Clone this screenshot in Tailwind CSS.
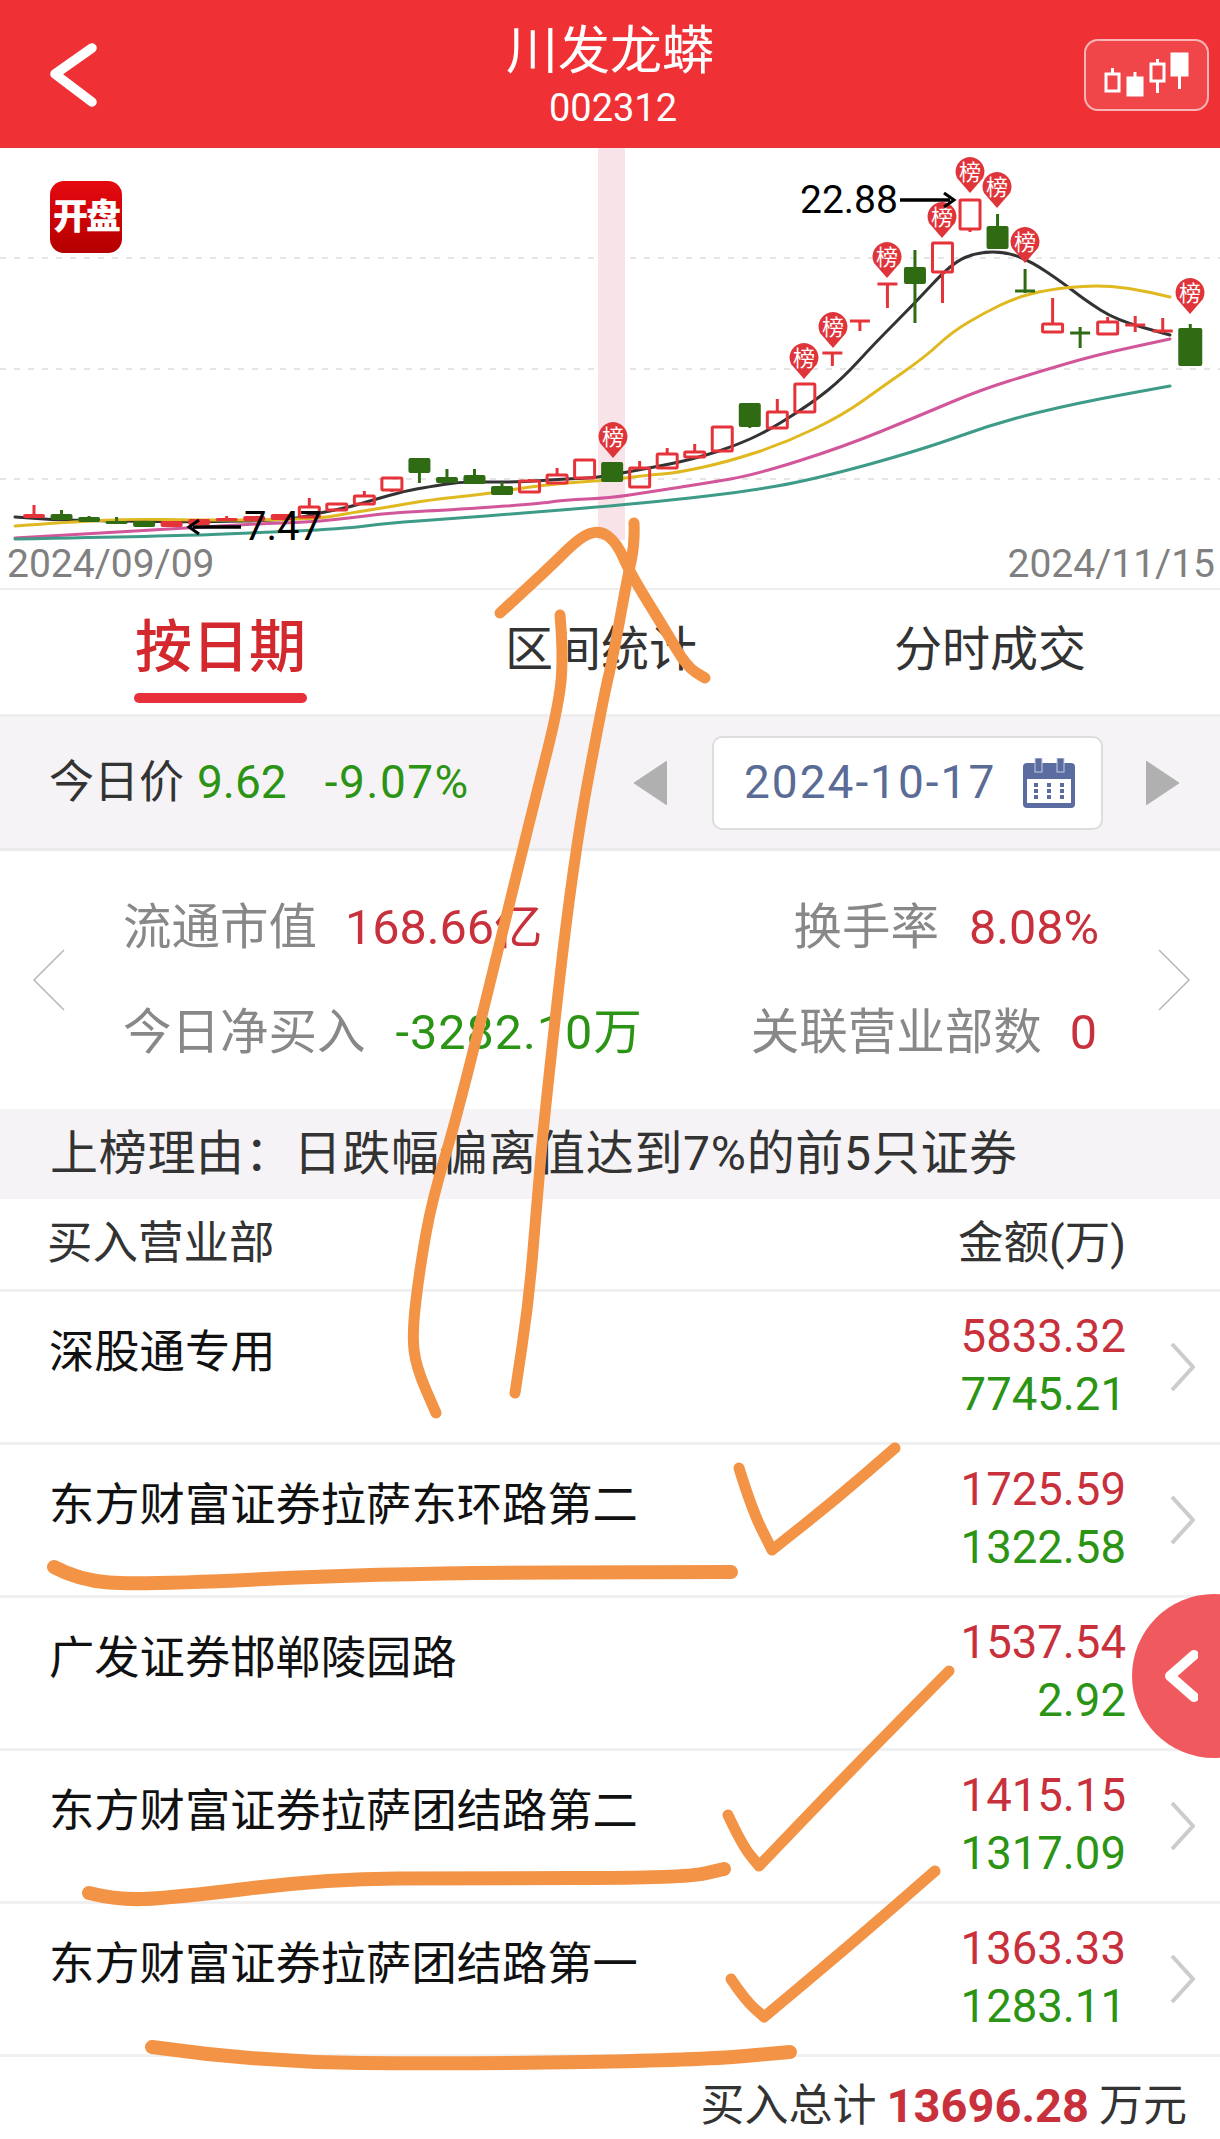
<!DOCTYPE html>
<html lang="zh-CN">
<head>
    <meta charset="UTF-8">
    <meta name="viewport" content="width=device-width, initial-scale=1.0">
    <title>川发龙蟒 龙虎榜</title>
    <script src="https://cdn.jsdelivr.net/npm/@tailwindcss/browser@4"></script>
</head>
<body class="bg-white font-['Roboto','Noto_Sans_CJK_SC',sans-serif]">
<div class="relative w-[1220px] h-[2139px] overflow-hidden bg-white">

    <!-- Header -->
    <header class="h-[148px] bg-[#ef3136] grid grid-cols-[1fr_auto_1fr] text-white">
        <div class="pl-[50px] pt-[43px]">
            <svg width="48" height="64" viewBox="0 0 48 64" fill="none" stroke="white" stroke-width="9.5" stroke-linecap="round" stroke-linejoin="round">
                <path d="M42 5 L5 31 L42 59"/>
            </svg>
        </div>
        <div class="flex flex-col items-center pt-[24px]">
            <div class="text-[52px] leading-[56px]">川发龙蟒</div>
            <div class="mt-[6px] ml-[6px] text-[38px] leading-[44px]">002312</div>
        </div>
        <div class="flex justify-end pr-[11px] pt-[39px]">
            <div class="w-[125px] h-[72px] rounded-[14px] border-[2px] border-white/60 bg-white/10">
                <svg width="120" height="68" viewBox="1087 41 120 68" fill="white" stroke="white" stroke-width="3">
                    <rect x="1107" y="74" width="13" height="17" fill="none"/><path d="M1113.500 68V74"/>
                    <rect x="1129" y="78" width="14" height="17"/><path d="M1136 72V78"/>
                    <rect x="1152" y="64" width="13" height="17" fill="none"/><path d="M1158.500 59V64M1158.500 81V93"/>
                    <rect x="1173" y="54" width="15" height="21"/><path d="M1180.500 75V89"/>
                </svg>
            </div>
        </div>
    </header>

    <!-- K line chart -->
    <div class="relative h-[442px] border-b-[2px] border-[#eeeeee]">
        <svg id="chart" class="block" width="1220" height="440" viewBox="0 148 1220 440">
            <path d="M0 258H1220M0 369H1220M0 479H1220" stroke="#dddddd" stroke-width="1.500" stroke-dasharray="6 8"/>
            <rect x="598" y="148" width="27" height="392" fill="#f7e3e8"/>
            <g id="lines" fill="none" stroke-width="3" stroke-linecap="round" stroke-linejoin="round"></g>
            <g id="candles"></g>
            <g id="pins"></g>
            <text x="800" y="213" font-size="39" fill="#000">22.88</text>
            <path d="M900 200H950" stroke="#000" stroke-width="3.500"/>
            <path d="M944 193L954 200L944 207" fill="none" stroke="#000" stroke-width="3"/>
            <path d="M193 527H241" stroke="#000" stroke-width="3.500"/>
            <path d="M199 520L189 527L199 534" fill="none" stroke="#000" stroke-width="3"/>
            <text x="244" y="540" font-size="40" fill="#000">7.47</text>
            <text x="7" y="577" font-size="39" fill="#808080">2024/09/09</text>
            <text x="1215" y="577" font-size="39" fill="#808080" text-anchor="end">2024/11/15</text>
        </svg>
        <div class="absolute left-[50px] top-[33px] w-[72px] h-[72px] rounded-[14px] bg-linear-to-b from-[#e60a10] to-[#b40000] flex items-center justify-center text-white font-black text-[35px] leading-none tracking-[-2px]">开盘</div>
    </div>

    <!-- Tabs -->
    <div class="h-[124px] flex items-start pt-[24px] pl-[134px] text-[48px] leading-[72px] text-[#333333]">
        <div class="w-[173px] -mt-[2px] flex flex-col items-center">
            <div class="whitespace-nowrap text-[57px] font-medium text-[#d2282e]">按日期</div>
            <div class="mt-[9px] w-[173px] h-[10px] rounded-full bg-[#e8303a]"></div>
        </div>
        <div class="ml-[198px]">区间统计</div>
        <div class="ml-[197px]">分时成交</div>
    </div>

    <!-- Price and date bar -->
    <div class="h-[137px] bg-[#f5f3f5] border-t-[3px] border-b-[3px] border-t-[#eeeeee] border-b-[#ebebeb] flex items-center pl-[49px] pr-[41px] text-[45px]">
        <div class="flex-1 flex items-center">
            <span class="text-[#333333]">今日价</span>
            <span class="ml-[13px] text-[46px] text-[#2b9414]">9.62</span>
            <span class="ml-[38px] text-[46px] tracking-[1.5px] text-[#2b9414]">-9.07%</span>
        </div>
        <svg width="33" height="44" viewBox="0 0 33 44" fill="#b0b0b0"><path d="M33 0V44L0 22Z" stroke="#b0b0b0" stroke-width="1" stroke-linejoin="round"/></svg>
        <div class="ml-[45px] mr-[43px] w-[391px] h-[94px] rounded-[10px] bg-white border-[2px] border-[#dddddd] flex items-center pl-[30px] text-[46px] tracking-[2px] text-[#5a6b96]">
            <span>2024-10-17</span>
            <svg class="ml-auto mr-[26px]" width="52" height="50" viewBox="0 0 52 50">
                <rect x="0" y="5" width="52" height="45" rx="4" fill="#5a6ca0"/>
                <rect x="12" y="0" width="7" height="14" fill="#5a6ca0" stroke="#c6cde0" stroke-width="1"/>
                <rect x="34" y="0" width="7" height="14" fill="#5a6ca0" stroke="#c6cde0" stroke-width="1"/>
                <rect x="4" y="21" width="44" height="24" fill="white"/>
                <path d="M11 25h4v4h-4zM24 25h4v4h-4zM37 25h4v4h-4zM11 31h4v4h-4zM24 31h4v4h-4zM37 31h4v4h-4zM11 37h4v4h-4zM24 37h4v4h-4zM37 37h4v4h-4z" fill="#5a6ca0"/>
            </svg>
        </div>
        <svg width="33" height="44" viewBox="0 0 33 44" fill="#b0b0b0"><path d="M0 0V44L33 22Z" stroke="#b0b0b0" stroke-width="1" stroke-linejoin="round"/></svg>
    </div>

    <!-- Stats -->
    <div class="h-[258px] flex items-center text-[48.5px] leading-[105px] text-[#888888]">
        <svg class="ml-[32px]" width="34" height="62" viewBox="0 0 34 62" fill="none" stroke="#b8b8b8" stroke-width="1.500"><path d="M32 1L2 31L32 61"/></svg>
        <div class="ml-[57px] w-[976px]">
            <div class="flex justify-between">
                <div>流通市值<span class="ml-[28px] text-[#c8313c]">168.66亿</span></div>
                <div>换手率<span class="ml-[30px] text-[#c8313c]">8.08%</span></div>
            </div>
            <div class="flex justify-between">
                <div>今日净买入<span class="ml-[30px] tracking-[1px] text-[#2b9414]">-3282.10万</span></div>
                <div>关联营业部数<span class="ml-[28px] mr-[2px] text-[#c8313c]">0</span></div>
            </div>
        </div>
        <svg class="ml-[58px]" width="34" height="62" viewBox="0 0 34 62" fill="none" stroke="#b8b8b8" stroke-width="1.500"><path d="M2 1L32 31L2 61"/></svg>
    </div>

    <!-- Reason -->
    <div class="h-[90px] bg-[#f5f3f5] pl-[50px] flex items-center text-[48px] tracking-[0.7px] text-[#333333]">上榜理由：日跌幅偏离值达到7%的前5只证券</div>

    <!-- Buy table -->
    <div class="h-[93px] border-b-[3px] border-[#f0f0f0] flex items-center justify-between pl-[47px] pr-[94px] text-[45.5px] text-[#333333]">
        <div>买入营业部</div>
        <div>金额(万)</div>
    </div>

    <div class="h-[153px] border-b-[3px] border-[#f0f0f0] flex items-center pl-[49px]">
        <div class="self-start flex-1 pt-[32px] text-[45.3px] leading-[58px] text-[#111111]">深股通专用</div>
        <div class="self-start pt-[16px] text-right text-[45.5px] leading-[58px]">
            <div class="text-[#c8313c]">5833.32</div>
            <div class="text-[#2b9414]">7745.21</div>
        </div>
        <svg class="ml-[44px] mr-[25px]" width="25" height="48" viewBox="0 0 25 48" fill="none" stroke="#cccccc" stroke-width="4"><path d="M2 1L23 24L2 47"/></svg>
    </div>
    <div class="h-[153px] border-b-[3px] border-[#f0f0f0] flex items-center pl-[49px]">
        <div class="self-start flex-1 pt-[32px] text-[45.3px] leading-[58px] text-[#111111]">东方财富证券拉萨东环路第二</div>
        <div class="self-start pt-[16px] text-right text-[45.5px] leading-[58px]">
            <div class="text-[#c8313c]">1725.59</div>
            <div class="text-[#2b9414]">1322.58</div>
        </div>
        <svg class="ml-[44px] mr-[25px]" width="25" height="48" viewBox="0 0 25 48" fill="none" stroke="#cccccc" stroke-width="4"><path d="M2 1L23 24L2 47"/></svg>
    </div>
    <div class="h-[153px] border-b-[3px] border-[#f0f0f0] flex items-center pl-[49px]">
        <div class="self-start flex-1 pt-[32px] text-[45.3px] leading-[58px] text-[#111111]">广发证券邯郸陵园路</div>
        <div class="self-start pt-[16px] text-right text-[45.5px] leading-[58px]">
            <div class="text-[#c8313c]">1537.54</div>
            <div class="text-[#2b9414]">2.92</div>
        </div>
        <svg class="ml-[44px] mr-[25px]" width="25" height="48" viewBox="0 0 25 48" fill="none" stroke="#cccccc" stroke-width="4"><path d="M2 1L23 24L2 47"/></svg>
    </div>
    <div class="h-[153px] border-b-[3px] border-[#f0f0f0] flex items-center pl-[49px]">
        <div class="self-start flex-1 pt-[32px] text-[45.3px] leading-[58px] text-[#111111]">东方财富证券拉萨团结路第二</div>
        <div class="self-start pt-[16px] text-right text-[45.5px] leading-[58px]">
            <div class="text-[#c8313c]">1415.15</div>
            <div class="text-[#2b9414]">1317.09</div>
        </div>
        <svg class="ml-[44px] mr-[25px]" width="25" height="48" viewBox="0 0 25 48" fill="none" stroke="#cccccc" stroke-width="4"><path d="M2 1L23 24L2 47"/></svg>
    </div>
    <div class="h-[153px] border-b-[3px] border-[#f0f0f0] flex items-center pl-[49px]">
        <div class="self-start flex-1 pt-[32px] text-[45.3px] leading-[58px] text-[#111111]">东方财富证券拉萨团结路第一</div>
        <div class="self-start pt-[16px] text-right text-[45.5px] leading-[58px]">
            <div class="text-[#c8313c]">1363.33</div>
            <div class="text-[#2b9414]">1283.11</div>
        </div>
        <svg class="ml-[44px] mr-[25px]" width="25" height="48" viewBox="0 0 25 48" fill="none" stroke="#cccccc" stroke-width="4"><path d="M2 1L23 24L2 47"/></svg>
    </div>

    <div class="h-[82px] flex items-center justify-end pr-[33px] pt-[16px] text-[44px] text-[#333333]">
        买入总计<span class="mx-[10px] font-bold text-[47px] text-[#c8313c]">13696.28</span>万元
    </div>

    <!-- Floating side button -->
    <div class="absolute left-[1132px] top-[1594px] w-[164px] h-[164px] rounded-full bg-[#f05a5f]">
        <svg class="mt-[56px] ml-[32px]" width="34" height="52" viewBox="0 0 34 52" fill="none" stroke="white" stroke-width="10" stroke-linecap="round" stroke-linejoin="round"><path d="M30 5L6 26L30 47"/></svg>
    </div>

    <!-- Hand drawn marks on top of the screenshot -->
    <svg id="marks" class="absolute left-0 top-0 pointer-events-none" width="1220" height="2139" viewBox="0 0 1220 2139" fill="none" stroke="#f39346" stroke-width="11" stroke-linecap="round" stroke-linejoin="round"></svg>
</div>

<script>
    // [x index, wick top, body top, body bottom, wick bottom, type]  g = filled green, r = filled red, h = hollow red
    const candles = [
        [0,505,514,518,518,'r'],[1,510,514,520,520,'g'],[2,516,517,522,522,'g'],[3,517,521,524,524,'g'],
        [4,521,521,527,527,'g'],[5,521,521,527,527,'r'],[6,519,519,525,525,'r'],[7,516,518,521,521,'r'],
        [8,516,516,521,521,'r'],[9,514,514,520,520,'r'],[10,498,507,517,517,'h'],[11,504,504,510,510,'h'],
        [12,491,496,504,504,'h'],[13,478,478,490,492,'h'],[14,458,458,473,483,'g'],[15,469,477,483,483,'g'],
        [16,469,475,484,484,'g'],[17,482,486,495,495,'g'],[18,479,481,492,492,'h'],[19,468,475,483,483,'h'],
        [20,460,460,478,478,'h'],[21,462,462,482,482,'g'],[22,461,468,487,487,'h'],[23,448,454,468,468,'h'],
        [24,444,452,457,457,'h'],[25,427,427,451,451,'h'],[26,403,403,427,428,'g'],[27,399,412,428,428,'h'],
        [28,384,384,412,412,'h'],[29,353,353,353,366,'r'],[30,321,321,321,331,'r'],[31,284,284,284,308,'r'],
        [32,250,267,284,323,'g'],[33,243,243,272,303,'h'],[34,200,200,229,232,'h'],[35,214,226,249,249,'g'],
        [36,269,291,291,293,'g'],[37,298,324,332,332,'h'],[38,327,333,333,348,'g'],[39,317,322,334,334,'h'],
        [40,316,325,325,332,'r'],[41,318,331,331,333,'r'],[42,324,328,366,366,'g']
    ];
    const ma = [
        ['#333333', [[15,517],[50,520],[117,521],[200,522],[290,520],[319,513],[346,508],[373,500],[405,491],[428,487],[459,482],[486,482],[521,482],[564,479],[595,478],[622,473],[676,463],[707,455],[734,446],[766,432],[812,403],[843,378],[875,343],[913,305],[952,263],[978,252],[1007,252],[1032,262],[1063,283],[1085,300],[1116,320],[1170,335]]],
        ['#e0b820', [[15,526],[70,522],[128,519],[195,520],[272,520],[323,518],[350,513],[389,507],[428,500],[486,494],[521,488],[564,483],[610,480],[649,475],[676,473],[727,462],[785,443],[843,415],[882,387],[925,357],[952,332],[984,313],[1015,298],[1046,290],[1092,285],[1131,288],[1170,297]]],
        ['#d2569a', [[15,538],[117,532],[187,528],[253,524],[311,522],[350,518],[389,513],[447,510],[537,504],[564,500],[610,498],[649,492],[707,483],[754,475],[843,447],[921,415],[980,390],[1038,372],[1096,355],[1170,339]]],
        ['#3d9b87', [[15,539],[175,536],[249,533],[342,529],[389,523],[447,519],[525,513],[610,506],[672,500],[742,492],[812,480],[921,450],[999,422],[1077,403],[1170,386]]]
    ];
    // pin centre
    const pins = [[613,437],[804,358],[833,327],[887,257],[942,217],[970,172],[997,187],[1025,242],[1190,293]];
    // orange pen strokes [width, points]; a repeated point keeps the corner of a tick sharp
    const marks = [
        [11, [[500,613],[547,570],[580,537],[600,530],[617,543],[630,573],[667,633],[687,667],[705,678]]],
        [11, [[634,523],[635,543],[627,580],[613,657],[603,700],[573,860],[545,1110],[537,1200],[529,1300],[515,1393]]],
        [11, [[560,615],[563,650],[560,700],[535,800],[520,860],[459,1110],[432,1200],[420,1267],[412,1333],[416,1367],[436,1413]]],
        [11, [[739,1468],[752,1510],[772,1550],[772,1550],[835,1500],[895,1448]]],
        [14, [[54,1567],[78,1580],[140,1585],[389,1573],[731,1572]]],
        [11, [[728,1815],[742,1845],[759,1866],[759,1866],[856,1765],[949,1671]]],
        [14, [[89,1893],[117,1900],[171,1898],[327,1879],[467,1878],[685,1878],[724,1869]]],
        [11, [[731,1979],[745,2000],[764,2017],[764,2017],[850,1945],[935,1871]]],
        [14, [[152,2047],[257,2062],[467,2064],[700,2060],[790,2052]]]
    ];

    const green = '#2f6b12', red = '#e5333a';

    // smooth a polyline through the midpoints of its samples
    function smooth(pts) {
        let d = 'M' + pts[0].join(' ');
        for (let i = 1; i < pts.length - 1; i++) {
            const mx = (pts[i][0] + pts[i + 1][0]) / 2, my = (pts[i][1] + pts[i + 1][1]) / 2;
            d += ` Q${pts[i][0]} ${pts[i][1]} ${mx} ${my}`;
        }
        return d + ' L' + pts[pts.length - 1].join(' ');
    }

    document.getElementById('lines').innerHTML = ma.map(([color, pts]) => `<path d="${smooth(pts)}" stroke="${color}"/>`).join('');
    document.getElementById('marks').innerHTML = marks.map(([w, pts]) => `<path d="${smooth(pts)}" stroke-width="${w}"/>`).join('');

    document.getElementById('candles').innerHTML = candles.map(([i, wt, bt, bb, wb, type]) => {
        const x = 34 + 27.53 * i, w = i === 42 ? 22 : 20, color = type === 'g' ? green : red;
        let s = `<path d="M${x} ${wt}V${bt}M${x} ${bb}V${wb}" stroke="${color}" stroke-width="3"/>`;
        if (bt === bb) {
            s += `<path d="M${x - 10} ${bt}H${x + 10}" stroke="${color}" stroke-width="3"/>`;
        } else if (type === 'h') {
            s += `<rect x="${x - w / 2}" y="${bt}" width="${w}" height="${bb - bt}" rx="1" fill="none" stroke="${color}" stroke-width="3"/>`;
        } else {
            s += `<rect x="${x - w / 2 - 1}" y="${bt}" width="${w + 2}" height="${bb - bt}" rx="2" fill="${color}"/>`;
        }
        return s;
    }).join('');

    document.getElementById('pins').innerHTML = pins.map(([x, y]) =>
        `<path d="M${x - 13} ${y + 6} A14.500 14.500 0 1 1 ${x + 13} ${y + 6} L${x} ${y + 21} Z" fill="#df353a"/>` +
        `<text x="${x}" y="${y + 8}" font-size="22" fill="white" text-anchor="middle">榜</text>`
    ).join('');
</script>
</body>
</html>
